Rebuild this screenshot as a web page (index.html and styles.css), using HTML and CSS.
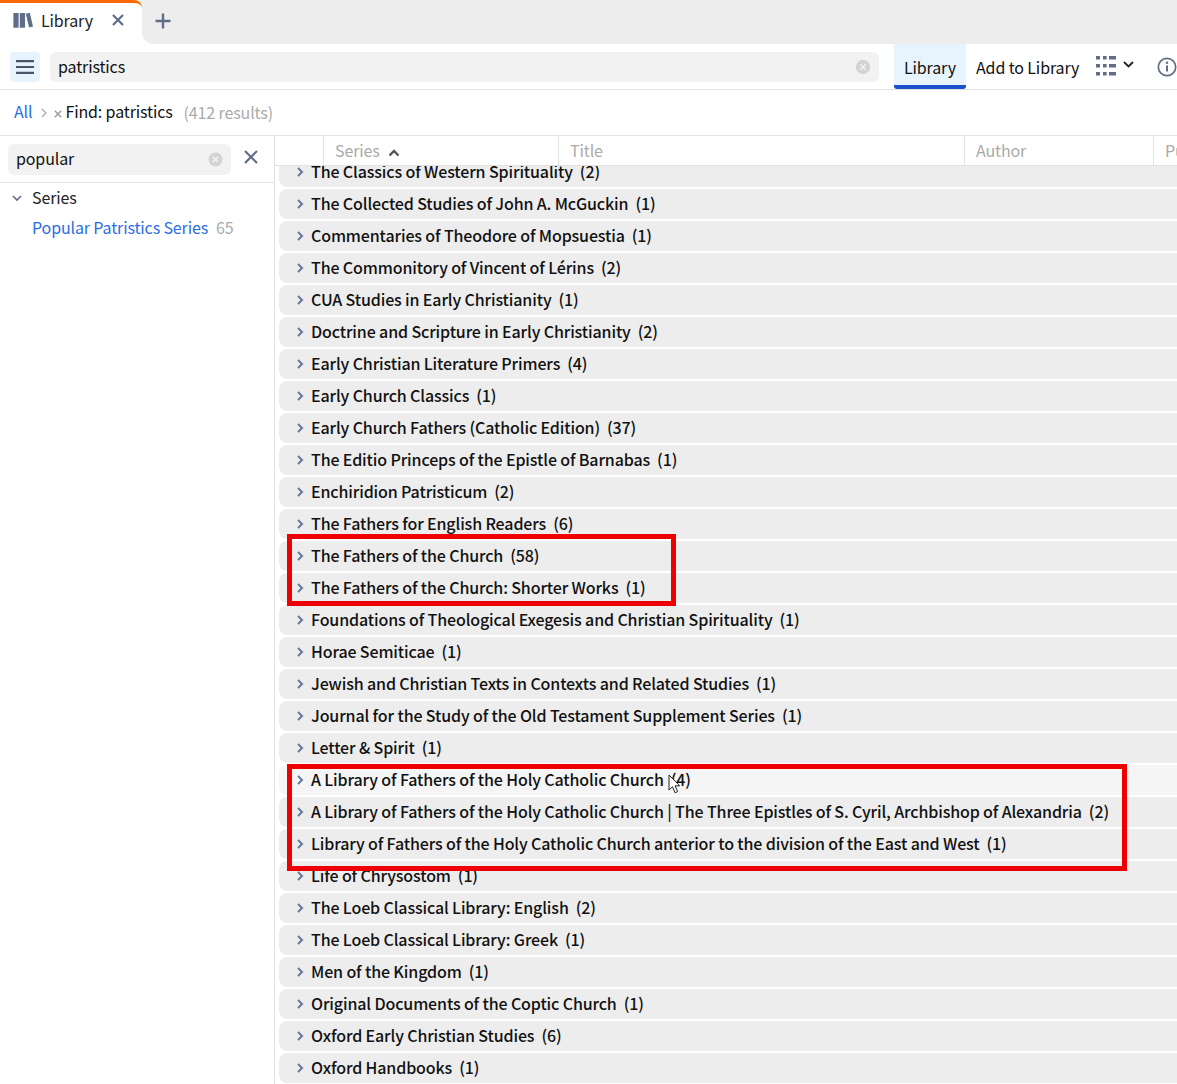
FILE: index.html
```html
<!DOCTYPE html>
<html lang="en">
<head>
<meta charset="utf-8">
<title>Library</title>
<link rel="stylesheet" href="styles.css">
</head>
<body>
<div class="tabbar">
  <div class="tab">
    <svg class="tab-icon" width="20" height="16" viewBox="0 0 20 16"><path d="M.4 1h5.200v14.800H.4zM6.800 1H12v14.800H6.800zM12.800 1.700l4-.9L20 14.600l-3.900.9z" fill="#5f6d88"/></svg>
    <span class="tab-label">Library</span>
    <svg class="tab-close" width="14" height="14" viewBox="0 0 14 14"><path d="M2 2l10 10M12 2L2 12" stroke="#5f6d88" stroke-width="2.200" fill="none"/></svg>
  </div>
  <svg class="tab-add" width="16" height="16" viewBox="0 0 16 16"><path d="M8 .5v15M.5 8h15" stroke="#5f6d88" stroke-width="2.400" fill="none"/></svg>
</div>

<div class="toolbar">
  <div class="menu-btn">
    <svg width="18" height="14" viewBox="0 0 18 14"><path d="M0 1.200h18M0 7h18M0 12.800h18" stroke="#4a5568" stroke-width="2.200" fill="none"/></svg>
  </div>
  <div class="search main-search">
    <span class="search-text">patristics</span>
    <svg class="clear" width="16" height="16" viewBox="0 0 16 16"><circle cx="8" cy="8" r="7.200" fill="#d3d3d3"/><path d="M5.200 5.200l5.600 5.600M10.800 5.200l-5.600 5.600" stroke="#f2f2f2" stroke-width="1.600"/></svg>
  </div>
  <div class="mode active">Library</div>
  <div class="mode">Add to Library</div>
  <div class="view-btn">
    <svg width="20" height="20" viewBox="0 0 20 20" fill="#5f6d88"><path d="M0 0h4v3.400H0zM7 0h3.600v3.400H7zM13 0h7v3.400h-7zM0 8h4v3.400H0zM7 8h3.600v3.400H7zM13 8h7v3.400h-7zM0 16h4v3.400H0zM7 16h3.600v3.400H7zM13 16h7v3.400h-7z"/></svg>
    <svg class="view-caret" width="11" height="7" viewBox="0 0 11 7"><path d="M1 1l4.500 4.500L10 1" stroke="#222" stroke-width="1.800" fill="none"/></svg>
  </div>
  <svg class="info" width="20" height="20" viewBox="0 0 20 20"><circle cx="10" cy="10" r="8.700" fill="none" stroke="#5f6d88" stroke-width="1.700"/><path d="M10 8.600v6" stroke="#5f6d88" stroke-width="2"/><circle cx="10" cy="5.800" r="1.200" fill="#5f6d88"/></svg>
</div>

<div class="crumbs">
  <span class="crumb-all">All</span>
  <svg class="crumb-sep" width="6" height="10" viewBox="0 0 6 10"><path d="M1 1l4 4-4 4" stroke="#aaa" stroke-width="1.300" fill="none"/></svg>
  <svg class="crumb-x" width="8" height="8" viewBox="0 0 8 8"><path d="M.8.8l6.400 6.400M7.200.8L.8 7.200" stroke="#999" stroke-width="1.400"/></svg>
  <span class="crumb-find">Find: patristics</span>
  <span class="crumb-count">(412 results)</span>
</div>

<div class="main">
  <aside class="sidebar">
    <div class="side-search-row">
      <div class="search side-search">
        <span class="search-text">popular</span>
        <svg class="clear" width="15" height="15" viewBox="0 0 16 16"><circle cx="8" cy="8" r="7.400" fill="#d3d3d3"/><path d="M5.200 5.200l5.600 5.600M10.800 5.200l-5.600 5.600" stroke="#f2f2f2" stroke-width="1.600"/></svg>
      </div>
      <svg class="side-close" width="14" height="14" viewBox="0 0 14 14"><path d="M1 1l12 12M13 1L1 13" stroke="#5f6d88" stroke-width="2.200" fill="none"/></svg>
    </div>
    <div class="facet-head">
      <svg width="10" height="7" viewBox="0 0 10 7"><path d="M1 1l4 4 4-4" stroke="#5f6d88" stroke-width="1.600" fill="none"/></svg>
      <span class="facet-title">Series</span>
    </div>
    <div class="facet-item"><span class="facet-name">Popular Patristics Series</span><span class="facet-count">65</span></div>
  </aside>

  <section class="results">
    <div class="grid-head">
      <div class="col col-check"></div>
      <div class="col col-series">Series
        <svg class="sort" width="12" height="8" viewBox="0 0 12 8"><path d="M1.500 6.500L6 2l4.500 4.500" stroke="#555" stroke-width="2.400" fill="none"/></svg>
      </div>
      <div class="col col-title">Title</div>
      <div class="col col-author">Author</div>
      <div class="col col-pub">Publisher</div>
    </div>
    <div class="rows">
      <div class="row first"><svg class="chev" width="7" height="10" viewBox="0 0 7 10"><path d="M1 1l4 4-4 4"/></svg><span class="name">The Classics of Western Spirituality</span><span class="num">(2)</span></div>
      <div class="row"><svg class="chev" width="7" height="10" viewBox="0 0 7 10"><path d="M1 1l4 4-4 4"/></svg><span class="name">The Collected Studies of John A. McGuckin</span><span class="num">(1)</span></div>
      <div class="row"><svg class="chev" width="7" height="10" viewBox="0 0 7 10"><path d="M1 1l4 4-4 4"/></svg><span class="name">Commentaries of Theodore of Mopsuestia</span><span class="num">(1)</span></div>
      <div class="row"><svg class="chev" width="7" height="10" viewBox="0 0 7 10"><path d="M1 1l4 4-4 4"/></svg><span class="name">The Commonitory of Vincent of Lérins</span><span class="num">(2)</span></div>
      <div class="row"><svg class="chev" width="7" height="10" viewBox="0 0 7 10"><path d="M1 1l4 4-4 4"/></svg><span class="name">CUA Studies in Early Christianity</span><span class="num">(1)</span></div>
      <div class="row"><svg class="chev" width="7" height="10" viewBox="0 0 7 10"><path d="M1 1l4 4-4 4"/></svg><span class="name">Doctrine and Scripture in Early Christianity</span><span class="num">(2)</span></div>
      <div class="row"><svg class="chev" width="7" height="10" viewBox="0 0 7 10"><path d="M1 1l4 4-4 4"/></svg><span class="name">Early Christian Literature Primers</span><span class="num">(4)</span></div>
      <div class="row"><svg class="chev" width="7" height="10" viewBox="0 0 7 10"><path d="M1 1l4 4-4 4"/></svg><span class="name">Early Church Classics</span><span class="num">(1)</span></div>
      <div class="row"><svg class="chev" width="7" height="10" viewBox="0 0 7 10"><path d="M1 1l4 4-4 4"/></svg><span class="name">Early Church Fathers (Catholic Edition)</span><span class="num">(37)</span></div>
      <div class="row"><svg class="chev" width="7" height="10" viewBox="0 0 7 10"><path d="M1 1l4 4-4 4"/></svg><span class="name">The Editio Princeps of the Epistle of Barnabas</span><span class="num">(1)</span></div>
      <div class="row"><svg class="chev" width="7" height="10" viewBox="0 0 7 10"><path d="M1 1l4 4-4 4"/></svg><span class="name">Enchiridion Patristicum</span><span class="num">(2)</span></div>
      <div class="row"><svg class="chev" width="7" height="10" viewBox="0 0 7 10"><path d="M1 1l4 4-4 4"/></svg><span class="name">The Fathers for English Readers</span><span class="num">(6)</span></div>
      <div class="row"><svg class="chev" width="7" height="10" viewBox="0 0 7 10"><path d="M1 1l4 4-4 4"/></svg><span class="name">The Fathers of the Church</span><span class="num">(58)</span></div>
      <div class="row"><svg class="chev" width="7" height="10" viewBox="0 0 7 10"><path d="M1 1l4 4-4 4"/></svg><span class="name">The Fathers of the Church: Shorter Works</span><span class="num">(1)</span></div>
      <div class="row"><svg class="chev" width="7" height="10" viewBox="0 0 7 10"><path d="M1 1l4 4-4 4"/></svg><span class="name">Foundations of Theological Exegesis and Christian Spirituality</span><span class="num">(1)</span></div>
      <div class="row"><svg class="chev" width="7" height="10" viewBox="0 0 7 10"><path d="M1 1l4 4-4 4"/></svg><span class="name">Horae Semiticae</span><span class="num">(1)</span></div>
      <div class="row"><svg class="chev" width="7" height="10" viewBox="0 0 7 10"><path d="M1 1l4 4-4 4"/></svg><span class="name">Jewish and Christian Texts in Contexts and Related Studies</span><span class="num">(1)</span></div>
      <div class="row"><svg class="chev" width="7" height="10" viewBox="0 0 7 10"><path d="M1 1l4 4-4 4"/></svg><span class="name">Journal for the Study of the Old Testament Supplement Series</span><span class="num">(1)</span></div>
      <div class="row"><svg class="chev" width="7" height="10" viewBox="0 0 7 10"><path d="M1 1l4 4-4 4"/></svg><span class="name">Letter &amp; Spirit</span><span class="num">(1)</span></div>
      <div class="row hover"><svg class="chev" width="7" height="10" viewBox="0 0 7 10"><path d="M1 1l4 4-4 4"/></svg><span class="name">A Library of Fathers of the Holy Catholic Church</span><span class="num">(4)</span></div>
      <div class="row"><svg class="chev" width="7" height="10" viewBox="0 0 7 10"><path d="M1 1l4 4-4 4"/></svg><span class="name">A Library of Fathers of the Holy Catholic Church | The Three Epistles of S. Cyril, Archbishop of Alexandria</span><span class="num">(2)</span></div>
      <div class="row"><svg class="chev" width="7" height="10" viewBox="0 0 7 10"><path d="M1 1l4 4-4 4"/></svg><span class="name">Library of Fathers of the Holy Catholic Church anterior to the division of the East and West</span><span class="num">(1)</span></div>
      <div class="row"><svg class="chev" width="7" height="10" viewBox="0 0 7 10"><path d="M1 1l4 4-4 4"/></svg><span class="name">Life of Chrysostom</span><span class="num">(1)</span></div>
      <div class="row"><svg class="chev" width="7" height="10" viewBox="0 0 7 10"><path d="M1 1l4 4-4 4"/></svg><span class="name">The Loeb Classical Library: English</span><span class="num">(2)</span></div>
      <div class="row"><svg class="chev" width="7" height="10" viewBox="0 0 7 10"><path d="M1 1l4 4-4 4"/></svg><span class="name">The Loeb Classical Library: Greek</span><span class="num">(1)</span></div>
      <div class="row"><svg class="chev" width="7" height="10" viewBox="0 0 7 10"><path d="M1 1l4 4-4 4"/></svg><span class="name">Men of the Kingdom</span><span class="num">(1)</span></div>
      <div class="row"><svg class="chev" width="7" height="10" viewBox="0 0 7 10"><path d="M1 1l4 4-4 4"/></svg><span class="name">Original Documents of the Coptic Church</span><span class="num">(1)</span></div>
      <div class="row"><svg class="chev" width="7" height="10" viewBox="0 0 7 10"><path d="M1 1l4 4-4 4"/></svg><span class="name">Oxford Early Christian Studies</span><span class="num">(6)</span></div>
      <div class="row"><svg class="chev" width="7" height="10" viewBox="0 0 7 10"><path d="M1 1l4 4-4 4"/></svg><span class="name">Oxford Handbooks</span><span class="num">(1)</span></div>
    </div>
  </section>
</div>

<div class="mark mark-a"></div>
<div class="mark mark-b"></div>
<svg class="cursor" width="13" height="20" viewBox="0 0 13 20"><path d="M1 1v15l3.500-3.300 2.500 6 2.600-1.100-2.500-5.800h4.600z" fill="#fff" stroke="#222" stroke-width="1"/></svg>
</body>
</html>
```

FILE: styles.css
```css
* { box-sizing: border-box; }
html, body { margin: 0; height: 100%; }
body {
  width: 1177px;
  height: 1084px;
  overflow: hidden;
  position: relative;
  background: #fff;
  color: #111;
  font-family: "Noto Sans CJK SC", "Noto Sans", sans-serif;
  font-size: 16px;
  line-height: 24px;
  letter-spacing: -0.13px;
}
.tabbar {
  height: 44px;
  background: #ededed;
  display: flex;
  align-items: center;
}
.tab {
  position: relative;
  width: 142px;
  height: 44px;
  background: #fff;
  border-top: 3px solid #ff6a00;
  border-top-right-radius: 8px;
  display: flex;
  align-items: center;
  padding: 0 0 7px 13px;
  flex: none;
}
.tab::after {
  content: "";
  position: absolute;
  left: 100%;
  bottom: 0;
  width: 12px;
  height: 12px;
  background: radial-gradient(circle at 100% 0, #ededed 11.500px, #fff 12.500px);
}
.tab-icon { flex: none; }
.tab-label { margin-left: 8px; color: #222; }
.tab-close { margin-left: 18px; flex: none; }
.tab-add { margin-left: 13px; margin-top: -2px; flex: none; }

.toolbar {
  height: 46px;
  display: flex;
  align-items: center;
  border-bottom: 1px solid #e2e2e2;
  padding-left: 10px;
}
.menu-btn {
  width: 30px;
  height: 30px;
  background: #e8f4fd;
  border-radius: 4px;
  display: flex;
  align-items: center;
  justify-content: center;
  flex: none;
  margin-top: 1px;
}
.search {
  background: #f2f2f2;
  border-radius: 6px;
  display: flex;
  align-items: center;
  justify-content: space-between;
}
.main-search {
  width: 829px;
  height: 30px;
  margin-left: 10px;
  margin-top: 1px;
  padding: 0 8px;
  flex: none;
}
.search-text { color: #111; margin-top: -2px; }
.mode {
  height: 45px;
  padding: 1px 10px 0;
  display: flex;
  align-items: center;
  flex: none;
  color: #111;
}
.mode.active {
  margin-left: 15px;
  background: #e8f4fd;
  border-bottom: 4px solid #1a4fcc;
  border-radius: 0 0 3px 3px;
  width: 72px;
  padding: 5px 10px 0;
}
.view-btn {
  display: flex;
  align-items: flex-start;
  margin-left: 7px;
  flex: none;
  height: 20px;
  margin-top: -2px;
}
.view-caret { margin-left: 7px; margin-top: 5px; }
.info { margin-left: 23px; flex: none; margin-top: 1px; }

.crumbs {
  height: 46px;
  display: flex;
  align-items: center;
  border-bottom: 1px solid #e2e2e2;
  padding-left: 14px;
}
.crumb-all { color: #2a6de8; margin-top: -3px; }
.crumb-sep { margin-left: 9px; }
.crumb-x { margin-left: 7px; margin-top: 3px; }
.crumb-find { margin-left: 3px; color: #111; margin-top: -3px; }
.crumb-count { margin-left: 11px; color: #aaa; margin-top: -1px; }

.main { display: flex; height: 948px; }
.sidebar {
  width: 275px;
  flex: none;
  border-right: 1px solid #e2e2e2;
}
.side-search-row {
  height: 47px;
  display: flex;
  align-items: center;
  padding: 1px 0 0 8px;
  border-bottom: 1px solid #e2e2e2;
}
.side-search {
  width: 223px;
  height: 31px;
  padding: 0 8px;
  flex: none;
}
.side-search .search-text { margin-top: -4px; }
.side-close { margin-left: 13px; margin-top: -5px; flex: none; }
.facet-head {
  height: 30px;
  display: flex;
  align-items: center;
  gap: 10px;
  padding-left: 12px;
  color: #222;
}
.facet-title { margin-top: -3px; }
.facet-item {
  height: 30px;
  display: flex;
  align-items: center;
  padding-left: 32px;
}
.facet-name { color: #2a6de8; margin-top: -3px; }
.facet-count { color: #aaa; margin-left: 8px; margin-top: -3px; }

.results { flex: 1; min-width: 0; overflow: hidden; }
.grid-head {
  height: 30px;
  display: flex;
  border-bottom: 1px solid #e2e2e2;
  background: #fff;
  position: relative;
  z-index: 1;
  color: #aaa;
  white-space: nowrap;
}
.col {
  height: 29px;
  line-height: 28px;
  padding-left: 11px;
  border-right: 1px solid #e2e2e2;
  flex: none;
  overflow: hidden;
}
.col-check { width: 49px; padding: 0; }
.col-series { width: 235px; }
.col-title { width: 406px; }
.col-author { width: 189px; }
.col-pub { border-right: 0; }
.sort { margin-left: 5px; }

.rows {
  margin-top: -9px;
  padding-left: 4px;
  display: flex;
  flex-direction: column;
  gap: 2px;
}
.row {
  height: 30px;
  flex: none;
  background: #ededed;
  border-radius: 8px 0 0 8px;
  display: flex;
  align-items: center;
  padding-left: 18px;
  font-weight: 500;
  color: #111;
  white-space: nowrap;
}
.row.hover { background: #f5f5f5; }
.chev { flex: none; margin-top: -1px; }
.chev path { fill: none; stroke: #667a9a; stroke-width: 2; }
.name { margin-left: 7px; margin-top: -3px; }
.num { margin-left: 7px; margin-top: -3px; }

.mark {
  position: absolute;
  left: 287px;
  border: 5px solid #ee0000;
  pointer-events: none;
}
.mark-a { top: 534px; width: 389px; height: 72px; }
.mark-b { top: 764px; width: 840px; height: 107px; }
.cursor { position: absolute; left: 668px; top: 774px; }
```
